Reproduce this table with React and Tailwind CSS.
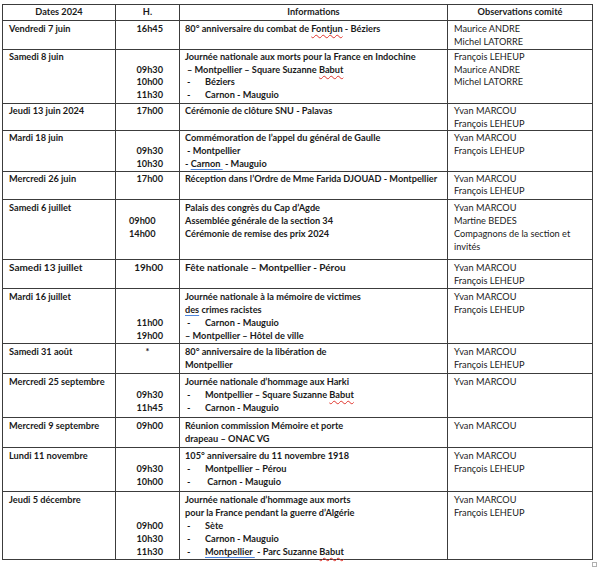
import React from "react";

// spell-check marks, as in the Word screenshot
const Sp = ({ children }) => (
  <span className="underline decoration-wavy decoration-[#e0342c] decoration-1 underline-offset-2">
    {children}
  </span>
);
const Gr = ({ children }) => (
  <span className="underline decoration-[#4f86dd] underline-offset-2">
    {children}
  </span>
);

const Dash = ({ children }) => (
  <div>
    <span className="inline-block w-[20px] pl-[2px]">-</span>
    {children}
  </div>
);

const blank = <>&nbsp;</>;

const rows = [
  {
    h: "h-[29px] leading-[13.3px]",
    date: "Vendredi 7 juin",
    time: ["16h45"],
    info: [<>80° anniversaire du combat de <Sp>Fontjun</Sp> - Béziers</>],
    obs: ["Maurice ANDRE", "Michel LATORRE"],
  },
  {
    h: "h-[54px] leading-[12.7px]",
    date: "Samedi 8 juin",
    time: [blank, "09h30", "10h00", "11h30"],
    info: [
      "Journée nationale aux morts pour la France en Indochine",
      <span className="pl-[2px]">– Montpellier – Square Suzanne <Sp>Babut</Sp></span>,
      <Dash>Béziers</Dash>,
      <Dash>Carnon - Mauguio</Dash>,
    ],
    obs: ["François LEHEUP", "Maurice ANDRE", "Michel LATORRE"],
  },
  {
    h: "h-[27px] leading-[12.7px]",
    date: "Jeudi 13 juin 2024",
    time: ["17h00"],
    info: ["Cérémonie de clôture SNU - Palavas"],
    obs: ["Yvan MARCOU", "François LEHEUP"],
  },
  {
    h: "h-[39px] leading-[12.7px]",
    date: "Mardi 18 juin",
    time: [blank, "09h30", "10h30"],
    info: [
      "Commémoration de l’appel du général de Gaulle",
      <span className="pl-[2px]">- Montpellier</span>,
      <>- <Gr>Carnon&nbsp;</Gr> - Mauguio</>,
    ],
    obs: ["Yvan MARCOU", "François LEHEUP"],
  },
  {
    h: "h-[28px] leading-[12.7px]",
    date: "Mercredi 26 juin",
    time: ["17h00"],
    info: ["Réception dans l’Ordre de Mme Farida DJOUAD - Montpellier"],
    obs: ["Yvan MARCOU", "François LEHEUP"],
  },
  {
    h: "h-[60px] leading-[13.3px]",
    date: "Samedi 6 juillet",
    time: [blank, "09h00", "14h00"],
    timeCls: "text-left pl-[13px]",
    info: [
      "Palais des congrès du Cap d’Agde",
      "Assemblée générale de la section 34",
      "Cérémonie de remise des prix 2024",
    ],
    obs: ["Yvan MARCOU", "Martine BEDES", "Compagnons de la section et", "invités"],
  },
  {
    h: "h-[29px] leading-[13.3px]",
    big: true,
    date: "Samedi 13 juillet",
    time: ["19h00"],
    info: ["Fête nationale – Montpellier - Pérou"],
    obs: ["Yvan MARCOU", "François LEHEUP"],
  },
  {
    h: "h-[55px] leading-[13px]",
    date: "Mardi 16 juillet",
    time: [blank, blank, "11h00", "19h00"],
    info: [
      "Journée nationale à la mémoire de victimes",
      <><Gr>des</Gr> crimes racistes</>,
      <Dash>Carnon - Mauguio</Dash>,
      "– Montpellier – Hôtel de ville",
    ],
    obs: ["Yvan MARCOU", "François LEHEUP"],
  },
  {
    h: "h-[30px] leading-[13.3px]",
    date: "Samedi 31 août",
    time: ["*"],
    timeCls: "text-center",
    info: ["80° anniversaire de la libération de", "Montpellier"],
    obs: ["Yvan MARCOU", "François LEHEUP"],
  },
  {
    h: "h-[44px] leading-[13.3px]",
    date: "Mercredi 25 septembre",
    time: [blank, "09h30", "11h45"],
    info: [
      "Journée nationale d’hommage aux Harki",
      <Dash>Montpellier – Square Suzanne <Sp>Babut</Sp></Dash>,
      <Dash>Carnon - Mauguio</Dash>,
    ],
    obs: ["Yvan MARCOU"],
  },
  {
    h: "h-[30px] leading-[13.3px]",
    date: "Mercredi 9 septembre",
    time: ["09h00"],
    info: ["Réunion commission Mémoire et porte", "drapeau – ONAC VG"],
    obs: ["Yvan MARCOU"],
  },
  {
    h: "h-[44px] leading-[13.3px]",
    date: "Lundi 11 novembre",
    time: [blank, "09h30", "10h00"],
    info: [
      "105° anniversaire du 11 novembre 1918",
      <Dash>Montpellier – Pérou</Dash>,
      <Dash>&nbsp;Carnon - Mauguio</Dash>,
    ],
    obs: ["Yvan MARCOU", "François LEHEUP"],
  },
  {
    h: "h-[68px] leading-[13.1px]",
    date: "Jeudi 5 décembre",
    time: [blank, blank, "09h00", "10h30", "11h30"],
    info: [
      "Journée nationale d’hommage aux morts",
      "pour la France pendant la guerre d’Algérie",
      <Dash>Sète</Dash>,
      <Dash>Carnon - Mauguio</Dash>,
      <Dash><Gr>Montpellier&nbsp;</Gr> - Parc Suzanne <Sp>Babut</Sp></Dash>,
    ],
    obs: ["Yvan MARCOU", "François LEHEUP"],
  },
];

const cell = "border border-[#3c3c3c] align-top pt-[1px] pb-0";

export default function App() {
  return (
    <div
      className="bg-white w-[599px] h-[569px] pt-[4px] pl-[2px] text-[#1a1a1a] text-[9.2px] leading-[12.7px]"
      style={{ fontFamily: "Lato, 'Noto Sans', sans-serif" }}
    >
      <table className="border-collapse table-fixed w-[590px]">
        <colgroup>
          <col className="w-[113px]" />
          <col className="w-[64px]" />
          <col className="w-[268px]" />
          <col className="w-[145px]" />
        </colgroup>
        <thead>
          <tr className="h-[16px] font-bold">
            <th className="border border-[#3c3c3c] text-center p-0">Dates 2024</th>
            <th className="border border-[#3c3c3c] text-center p-0">H.</th>
            <th className="border border-[#3c3c3c] text-center p-0">Informations</th>
            <th className="border border-[#3c3c3c] text-center p-0">Observations comité</th>
          </tr>
        </thead>
        <tbody>
          {rows.map((r, i) => (
            <tr key={i} className={r.h}>
              <td className={`${cell} pl-[6px] font-bold ${r.big ? "text-[10px]" : ""}`}>
                {r.date}
              </td>
              <td
                className={`${cell} font-bold ${r.timeCls || "text-right pr-[16px]"} ${
                  r.big ? "text-[10px]" : ""
                }`}
              >
                {r.time.map((t, j) => (
                  <div key={j}>{t}</div>
                ))}
              </td>
              <td className={`${cell} pl-[5px] font-bold ${r.big ? "text-[10px]" : ""}`}>
                {r.info.map((t, j) => (
                  <div key={j} className="whitespace-nowrap">
                    {t}
                  </div>
                ))}
              </td>
              <td className={`${cell} pl-[6px]`}>
                {r.obs.map((t, j) => (
                  <div key={j}>{t}</div>
                ))}
              </td>
            </tr>
          ))}
        </tbody>
      </table>
      <div className="ml-[590px] mt-[2px] w-[5px] h-[5px] border border-[#b0b0b0]" />
    </div>
  );
}
